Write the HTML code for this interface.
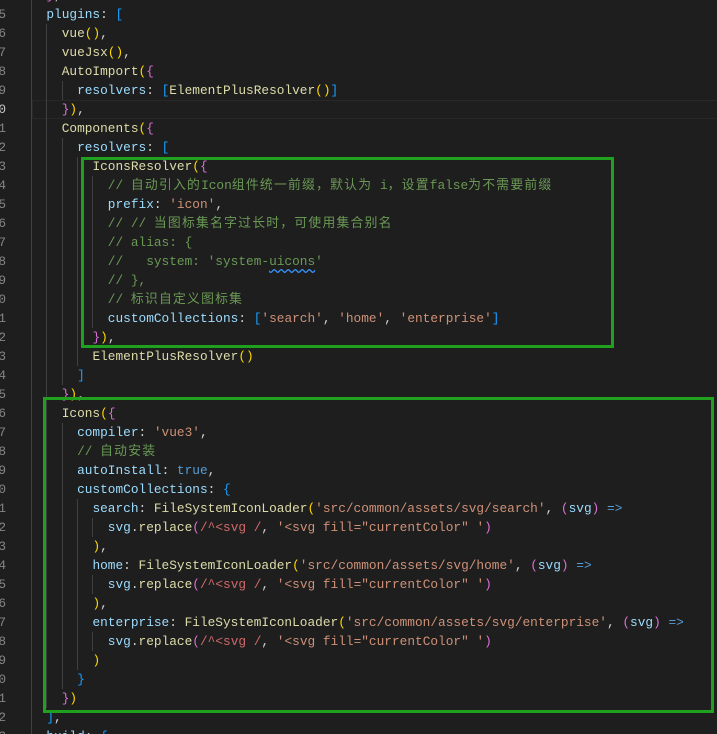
<!DOCTYPE html>
<html><head><meta charset="utf-8">
<style>
html,body{margin:0;padding:0;background:#1e1e1e;width:717px;height:734px;overflow:hidden;}
#ed{position:relative;width:717px;height:734px;overflow:hidden;font-family:"Liberation Mono","Noto Sans CJK SC",monospace;font-size:12.8px;}
.ln{position:absolute;height:19px;line-height:19px;white-space:pre;color:#d4d4d4;}
.l0{left:31px}.l1{left:46.36px}.l2{left:61.72px}.l3{left:77.08px}.l4{left:92.44px}.l5{left:107.8px}
.num{position:absolute;left:-24px;width:30px;height:19px;line-height:19px;color:#858585;text-align:right;}
.g{position:absolute;width:1px;background:#404040;}
.v{color:#9cdcfe}.f{color:#dcdcaa}.s{color:#ce9178}.c{color:#6a9955}.k{color:#569cd6}.r{color:#d16969}
.b1{color:#ffd700}.b2{color:#da70d6}.b3{color:#179fff}
.z{letter-spacing:1.25px}
.box{position:absolute;border:3px solid #1fa11f;box-sizing:border-box;}
.sq{text-decoration:underline wavy #3794ff;text-underline-offset:3px;}
</style></head><body><div id="ed">
<div style="position:absolute;left:32px;top:100px;width:690px;height:19px;box-sizing:border-box;border:1px solid #282828;"></div>

<div class="g" style="left:31px;top:0;height:734px"></div>
<div class="g" style="left:46px;top:24px;height:684px"></div>
<div class="g" style="left:62px;top:81px;height:19px"></div>
<div class="g" style="left:62px;top:138px;height:247px"></div>
<div class="g" style="left:62px;top:423px;height:266px"></div>
<div class="g" style="left:77px;top:157px;height:209px"></div>
<div class="g" style="left:77px;top:499px;height:171px"></div>
<div class="g" style="left:92px;top:176px;height:152px"></div>
<div class="g" style="left:92px;top:518px;height:19px"></div>
<div class="g" style="left:92px;top:575px;height:19px"></div>
<div class="g" style="left:92px;top:632px;height:19px"></div>

<div class="num" style="top:-14px">14</div>
<div class="num" style="top:5px">15</div>
<div class="num" style="top:24px">16</div>
<div class="num" style="top:43px">17</div>
<div class="num" style="top:62px">18</div>
<div class="num" style="top:81px">19</div>
<div class="num" style="top:100px;color:#c6c6c6">20</div>
<div class="num" style="top:119px">21</div>
<div class="num" style="top:138px">22</div>
<div class="num" style="top:157px">23</div>
<div class="num" style="top:176px">24</div>
<div class="num" style="top:195px">25</div>
<div class="num" style="top:214px">26</div>
<div class="num" style="top:233px">27</div>
<div class="num" style="top:252px">28</div>
<div class="num" style="top:271px">29</div>
<div class="num" style="top:290px">30</div>
<div class="num" style="top:309px">31</div>
<div class="num" style="top:328px">32</div>
<div class="num" style="top:347px">33</div>
<div class="num" style="top:366px">34</div>
<div class="num" style="top:385px">35</div>
<div class="num" style="top:404px">36</div>
<div class="num" style="top:423px">37</div>
<div class="num" style="top:442px">38</div>
<div class="num" style="top:461px">39</div>
<div class="num" style="top:480px">40</div>
<div class="num" style="top:499px">41</div>
<div class="num" style="top:518px">42</div>
<div class="num" style="top:537px">43</div>
<div class="num" style="top:556px">44</div>
<div class="num" style="top:575px">45</div>
<div class="num" style="top:594px">46</div>
<div class="num" style="top:613px">47</div>
<div class="num" style="top:632px">48</div>
<div class="num" style="top:651px">49</div>
<div class="num" style="top:670px">50</div>
<div class="num" style="top:689px">51</div>
<div class="num" style="top:708px">52</div>
<div class="num" style="top:727px">53</div>

<div class="ln l1" style="top:-14px"><span class="b2">}</span>,</div>
<div class="ln l1" style="top:5px"><span class="v">plugins</span>: <span class="b3">[</span></div>
<div class="ln l2" style="top:24px"><span class="f">vue</span><span class="b1">()</span>,</div>
<div class="ln l2" style="top:43px"><span class="f">vueJsx</span><span class="b1">()</span>,</div>
<div class="ln l2" style="top:62px"><span class="f">AutoImport</span><span class="b1">(</span><span class="b2">{</span></div>
<div class="ln l3" style="top:81px"><span class="v">resolvers</span>: <span class="b3">[</span><span class="f">ElementPlusResolver</span><span class="b1">()</span><span class="b3">]</span></div>
<div class="ln l2" style="top:100px"><span class="b2">}</span><span class="b1">)</span>,</div>
<div class="ln l2" style="top:119px"><span class="f">Components</span><span class="b1">(</span><span class="b2">{</span></div>
<div class="ln l3" style="top:138px"><span class="v">resolvers</span>: <span class="b3">[</span></div>
<div class="ln l4" style="top:157px"><span class="f">IconsResolver</span><span class="b1">(</span><span class="b2">{</span></div>
<div class="ln l5 c" style="top:176px">// <span class="z">自动引入的</span>Icon<span class="z">组件统一前缀，默认为</span> i<span class="z">，设置</span>false<span class="z">为不需要前缀</span></div>
<div class="ln l5" style="top:195px"><span class="v">prefix</span>: <span class="s">'icon'</span>,</div>
<div class="ln l5 c" style="top:214px">// // <span class="z">当图标集名字过长时，可使用集合别名</span></div>
<div class="ln l5 c" style="top:233px">// alias: {</div>
<div class="ln l5 c" style="top:252px">//   system: 'system-<span class="sq">uicons</span>'</div>
<div class="ln l5 c" style="top:271px">// },</div>
<div class="ln l5 c" style="top:290px">// <span class="z">标识自定义图标集</span></div>
<div class="ln l5" style="top:309px"><span class="v">customCollections</span>: <span class="b3">[</span><span class="s">'search'</span>, <span class="s">'home'</span>, <span class="s">'enterprise'</span><span class="b3">]</span></div>
<div class="ln l4" style="top:328px"><span class="b2">}</span><span class="b1">)</span>,</div>
<div class="ln l4" style="top:347px"><span class="f">ElementPlusResolver</span><span class="b1">()</span></div>
<div class="ln l3" style="top:366px"><span class="b3">]</span></div>
<div class="ln l2" style="top:385px"><span class="b2">}</span><span class="b1">)</span>,</div>
<div class="ln l2" style="top:404px"><span class="f">Icons</span><span class="b1">(</span><span class="b2">{</span></div>
<div class="ln l3" style="top:423px"><span class="v">compiler</span>: <span class="s">'vue3'</span>,</div>
<div class="ln l3 c" style="top:442px">// <span class="z">自动安装</span></div>
<div class="ln l3" style="top:461px"><span class="v">autoInstall</span>: <span class="k">true</span>,</div>
<div class="ln l3" style="top:480px"><span class="v">customCollections</span>: <span class="b3">{</span></div>
<div class="ln l4" style="top:499px"><span class="v">search</span>: <span class="f">FileSystemIconLoader</span><span class="b1">(</span><span class="s">'src/common/assets/svg/search'</span>, <span class="b2">(</span><span class="v">svg</span><span class="b2">)</span> <span class="k">=&gt;</span></div>
<div class="ln l5" style="top:518px"><span class="v">svg</span>.<span class="f">replace</span><span class="b2">(</span><span class="r">/^&lt;svg /</span>, <span class="s">'&lt;svg fill="currentColor" '</span><span class="b2">)</span></div>
<div class="ln l4" style="top:537px"><span class="b1">)</span>,</div>
<div class="ln l4" style="top:556px"><span class="v">home</span>: <span class="f">FileSystemIconLoader</span><span class="b1">(</span><span class="s">'src/common/assets/svg/home'</span>, <span class="b2">(</span><span class="v">svg</span><span class="b2">)</span> <span class="k">=&gt;</span></div>
<div class="ln l5" style="top:575px"><span class="v">svg</span>.<span class="f">replace</span><span class="b2">(</span><span class="r">/^&lt;svg /</span>, <span class="s">'&lt;svg fill="currentColor" '</span><span class="b2">)</span></div>
<div class="ln l4" style="top:594px"><span class="b1">)</span>,</div>
<div class="ln l4" style="top:613px"><span class="v">enterprise</span>: <span class="f">FileSystemIconLoader</span><span class="b1">(</span><span class="s">'src/common/assets/svg/enterprise'</span>, <span class="b2">(</span><span class="v">svg</span><span class="b2">)</span> <span class="k">=&gt;</span></div>
<div class="ln l5" style="top:632px"><span class="v">svg</span>.<span class="f">replace</span><span class="b2">(</span><span class="r">/^&lt;svg /</span>, <span class="s">'&lt;svg fill="currentColor" '</span><span class="b2">)</span></div>
<div class="ln l4" style="top:651px"><span class="b1">)</span></div>
<div class="ln l3" style="top:670px"><span class="b3">}</span></div>
<div class="ln l2" style="top:689px"><span class="b2">}</span><span class="b1">)</span></div>
<div class="ln l1" style="top:708px"><span class="b3">]</span>,</div>
<div class="ln l1" style="top:727px"><span class="v">build</span>: <span class="b3">{</span></div>

<div class="box" style="left:81px;top:157px;width:533px;height:191px;"></div>
<div class="box" style="left:43px;top:397px;width:671px;height:316px;"></div>
</div>
</body></html>
